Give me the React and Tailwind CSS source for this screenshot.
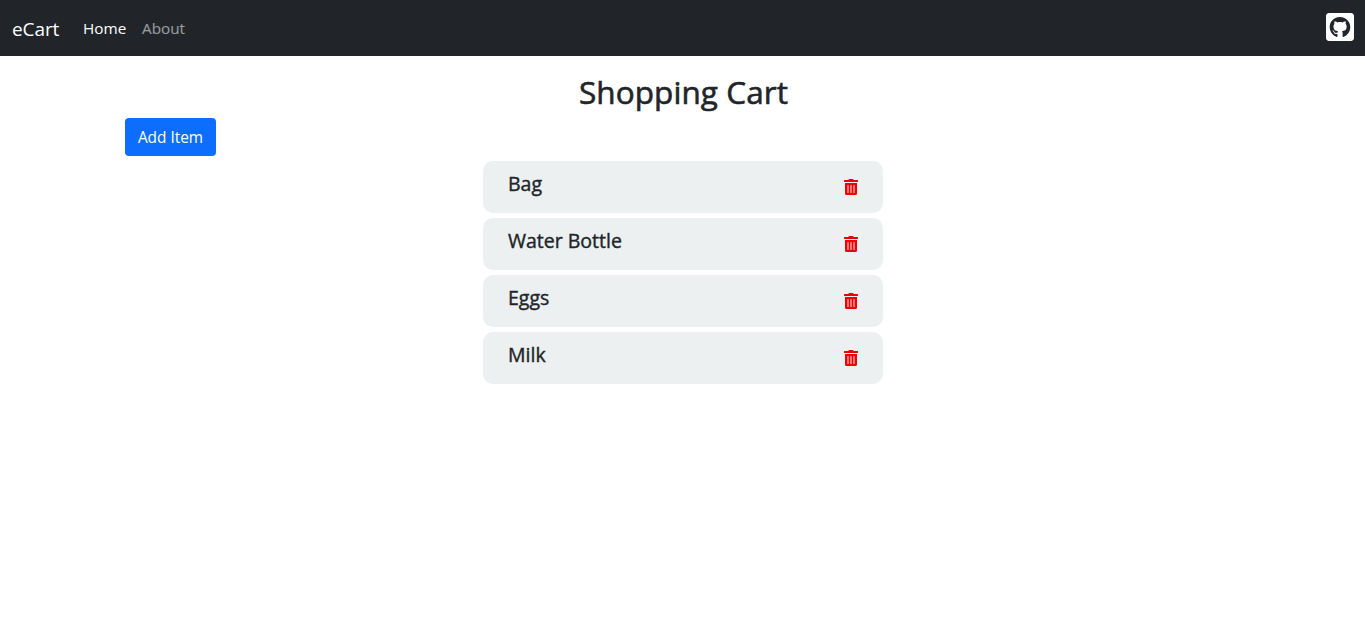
import { FaTrashAlt, FaGithubSquare } from "react-icons/fa";

const items = ["Bag", "Water Bottle", "Eggs", "Milk"];

export default function App() {
  return (
    <div className="min-h-screen bg-white text-[#212529] font-['Segoe_UI','Open_Sans',sans-serif]">
      <nav className="flex h-14 items-center bg-[#212529] px-3 pt-0.5 text-white">
        <span className="w-[47px] whitespace-nowrap text-[19px] tracking-[-0.1px]">eCart</span>
        <a href="#" className="mb-0.5 ml-6 w-[43px] whitespace-nowrap text-[15.3px]">Home</a>
        <a href="#" className="mb-0.5 ml-4 text-[15.3px] text-white/55">About</a>
        <a href="#" aria-label="GitHub" className="-mr-[3px] mb-1 ml-auto block">
          <FaGithubSquare className="h-8 w-8" />
        </a>
      </nav>
      <h1 className="h-[62px] pl-[2px] pt-[12px] text-center text-[31.5px] leading-[48px] tracking-[0.08px] [-webkit-text-stroke:0.6px_#212529]">Shopping Cart</h1>
      <button className="ml-[125px] block h-[38px] w-[91px] rounded bg-[#0d6efd] pt-0.5 text-[15.4px] text-white">Add Item</button>
      <ul className="mx-auto mt-[5px] flex w-[400px] flex-col gap-[5px]">
        {items.map((n) => (
          <li key={n} className="flex h-[52px] items-start justify-between rounded-[10px] bg-[#ecf0f1] px-[25px] pt-[9px] text-[19.5px] leading-7 [-webkit-text-stroke:0.4px_#212529]">
            <span className="pl-[0.5px]">{n}</span>
            <FaTrashAlt className="mt-[9px] h-4 w-[14px] text-[#f00000]" />
          </li>
        ))}
      </ul>
    </div>
  );
}
